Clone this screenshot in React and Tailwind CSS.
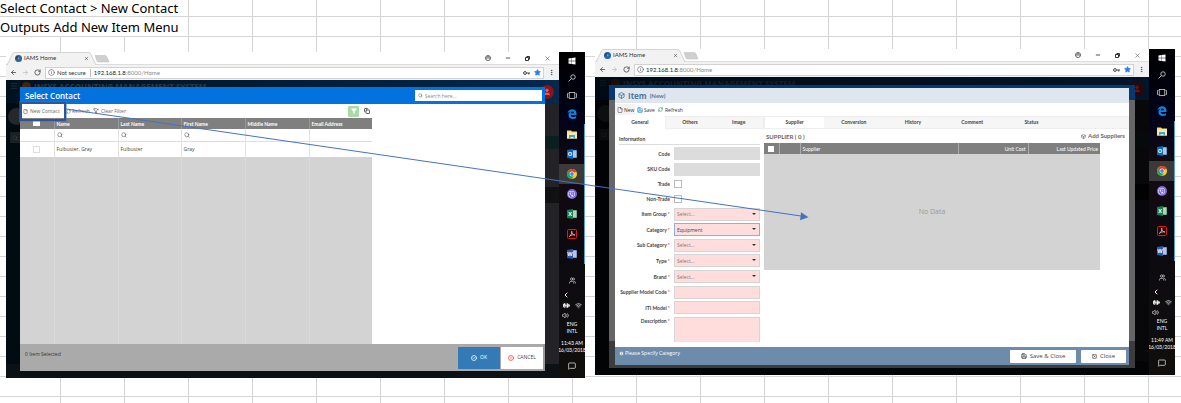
import React from "react";
import {
  ArrowLeft, ArrowRight, RotateCw, Info, User, Minus, X, Star, MoreVertical,
  Search, Wifi, ChevronLeft, MessageSquare, Volume2, BatteryCharging, Users,
  File, FunnelX, Funnel, Copy, Save, RefreshCw, Box, CircleCheck, CircleAlert, SquareX, Menu,
} from "lucide-react";
import { FaWindows, FaViber } from "react-icons/fa";

function Globe() {
  return (
    <svg viewBox="0 0 14 14" className="size-[7px] shrink-0">
      <circle cx="7" cy="7" r="7" fill="#1668c1" />
      <path d="M2 3 L6 1 L7 5 L4 8 L1 7Z" fill="#3c4652" />
      <path d="M6 4 L9 6 L8 9 L6 8Z" fill="#e08a34" />
    </svg>
  );
}

function KeyIcon() {
  return (
    <svg viewBox="0 0 14 8" className="ml-auto h-[4px] w-[7px] shrink-0" fill="none" stroke="#444" strokeWidth="2">
      <circle cx="4" cy="4" r="2.800" /><path d="M7 4 H14 M11.500 4 V7" />
    </svg>
  );
}

function EdgeLogo() {
  return (
    <svg viewBox="0 0 20 20" className="size-[10px]">
      <path d="M1 9 C2 3 6 .5 10.500 .5 C16 .5 19 4.500 19 9.500 V12 H7.500 C7.700 15 10 16.200 12.500 16.200 C14.500 16.200 16.500 15.500 18 14.600 V18.400 C16 19.500 13.800 20 11.500 20 C6.500 20 3 17 3 12.500 C3 9 5 6.500 8 5.200 C5 5.500 2.500 7 1 9 Z M7.600 8.600 H14 C14 6.300 13 4.800 10.900 4.800 C9 4.800 7.900 6.500 7.600 8.600Z" fill="#0c84e4" fillRule="evenodd" />
    </svg>
  );
}

function BrowserChrome({ insecure }) {
  return (
    <header className="bg-white text-[#555]">
      <div className="flex h-[13px] items-center border-b border-[#ddd]">
        <div className="relative flex h-[13px] w-[106px] items-center">
          <svg viewBox="0 0 106 13" className="absolute inset-0 h-[13px] w-[106px]">
            <path d="M1 13 L7 1 Q7.500 .5 8.500 .5 L82 .5 Q84 .5 84.500 1.500 L90 13" fill="#f2f2f2" stroke="#c4c4c4" strokeWidth=".7" />
            <path d="M89 3.500 H99 Q100.500 3.500 101 5 L103 10 H92.500 Q91.500 10 91 9Z" fill="#cfcfcf" stroke="#bbb" strokeWidth=".5" />
          </svg>
          <div className="relative flex w-[83px] items-center gap-[2px] pl-[9px]">
            <Globe />
            <span className="flex-1 font-['Lato',sans-serif] text-[6px] leading-[8px] text-[#333]">IAMS Home</span>
            <X className="size-[5px]" strokeWidth={3} />
          </div>
        </div>
        <div className="flex flex-1 items-center justify-end gap-[14px] pr-[8px]">
          <svg viewBox="0 0 12 12" className="size-[6px]" fill="none" stroke="#555" strokeWidth="1.800">
            <circle cx="6" cy="6" r="5" /><path d="M1 6 H11 M4 3.500 H8" />
          </svg>
          <Minus className="size-[6px]" strokeWidth={4} />
          <svg viewBox="0 0 10 10" className="size-[5px]" fill="none" stroke="#333" strokeWidth="2">
            <path d="M1 3 H7 V9 H1Z M3 1 H9 V7" />
          </svg>
          <X className="size-[7px]" strokeWidth={2} />
        </div>
      </div>
      <div className="flex h-[15px] items-center bg-[#f2f2f2] pl-[4px]">
        <ArrowLeft className="size-[7px]" strokeWidth={3} />
        <ArrowRight className="ml-[5px] size-[7px] text-[#c4c4c4]" strokeWidth={3} />
        <RotateCw className="ml-[5px] size-[7px]" strokeWidth={3} />
        <div className="ml-[4px] flex h-[12px] flex-1 items-center border border-[#d2d2d2] bg-white pl-[2px] pr-[2px] font-['Lato',sans-serif] text-[6px] leading-[8px]">
          <Info className="size-[7px]" strokeWidth={2} />
          {insecure && <span className="ml-[2px] border-r border-[#bbb] pr-[4px] text-[#333]">Not secure</span>}
          <span className={(insecure ? "ml-[3px]" : "ml-[2px]") + " text-[#222]"}>192.168.1.8</span>
          <span className="text-[#888]">:8000/Home</span>
          <KeyIcon />
          <Star className="ml-[4px] size-[7px] fill-[#2f7bf0] text-[#2f7bf0]" />
        </div>
        <MoreVertical className="mx-[4px] size-[7px]" strokeWidth={3} />
      </div>
    </header>
  );
}

function OfficeIcon({ letter, color, dark }) {
  return (
    <svg viewBox="0 0 20 20" className="h-[10px] w-[10px]">
      <rect x="9" y="2.500" width="10.500" height="15" fill="#fff" stroke={color} strokeWidth="1" />
      <path d="M11 6 H18 M11 10 H18 M11 14 H18" stroke={color} strokeWidth="1.600" />
      <path d="M0 2 L12 0 V20 L0 18Z" fill={dark} />
      <text x="6" y="14" textAnchor="middle" fontSize="11" fontWeight="700" fill="#fff" fontFamily="Open Sans, sans-serif">{letter}</text>
    </svg>
  );
}

function Folder() {
  return (
    <svg viewBox="0 0 20 18" className="h-[9px] w-[10px]">
      <path d="M0 1 H8 L10 3 H20 V17 H0Z" fill="#f7d774" />
      <path d="M0 5 H20 V17 H0Z" fill="#fce9a4" />
      <path d="M4 10 H16 V17 H13 V14 H7 V17 H4Z" fill="#37a5e0" />
    </svg>
  );
}

function ChromeLogo() {
  return (
    <svg viewBox="0 0 20 20" className="size-[10px]">
      <circle cx="10" cy="10" r="10" fill="#f9cd1b" />
      <path d="M10 10 L1.340 5 A10 10 0 0 1 18.660 5 Z" fill="#e33b2e" />
      <path d="M10 10 L1.340 5 A10 10 0 0 0 10 20 L14 12 Z" fill="#21a454" />
      <path d="M10 5 H18.660 A10 10 0 0 0 10 0Z" fill="#e33b2e" />
      <circle cx="10" cy="10" r="4.800" fill="#fff" />
      <circle cx="10" cy="10" r="3.800" fill="#4285f4" />
    </svg>
  );
}

function Acrobat() {
  return (
    <svg viewBox="0 0 20 20" className="size-[10px]">
      <rect x="1" y="1" width="18" height="18" rx="2" fill="#2a0606" stroke="#d3201f" strokeWidth="2" />
      <path d="M4.500 15 C8 13 10 8 9.500 4.500 C9 8 12 12 16 12 C12 11 8 12 4.500 15Z" fill="none" stroke="#f2dede" strokeWidth="1.400" />
    </svg>
  );
}

function TaskItem({ children, open, active }) {
  return (
    <li className={"flex h-[20px] items-center justify-center border-r " + (open ? "border-[#5b9bd5] " : "border-transparent ") + (active ? "bg-[#3a3a3a]" : "")}>
      {children}
    </li>
  );
}

function Taskbar({ time }) {
  return (
    <aside className="flex w-[26px] shrink-0 flex-col overflow-hidden bg-[linear-gradient(180deg,#000_0%,#02031a_22%,#140b10_35%,#0c0a10_60%,#100f0d_100%)] text-white">
      <ul>
        <li className="flex h-[17px] items-center justify-center"><FaWindows className="size-[8px]" /></li>
        <li className="flex h-[17px] items-center justify-center">
          <svg viewBox="0 0 16 16" className="size-[8px]" fill="none" stroke="#ddd" strokeWidth="1.600"><circle cx="10" cy="6" r="4.500" /><path d="M7 9 L1 15" /></svg>
        </li>
        <li className="flex h-[18px] items-center justify-center">
          <svg viewBox="0 0 20 14" className="h-[7px] w-[10px]" fill="none" stroke="#ccc" strokeWidth="1.600"><rect x="4.500" y="1" width="11" height="12" /><path d="M3 3 H1 V11 H3 M17 3 H19 V11 H17" /></svg>
        </li>
        <TaskItem><EdgeLogo /></TaskItem>
        <TaskItem open><Folder /></TaskItem>
        <TaskItem open><OfficeIcon letter="O" color="#1c78c8" dark="#0f66b5" /></TaskItem>
        <TaskItem open active><ChromeLogo /></TaskItem>
        <TaskItem open><span className="flex size-[10px] items-center justify-center rounded-full bg-[#7d68d8]"><FaViber className="size-[7px]" /></span></TaskItem>
        <TaskItem open><OfficeIcon letter="X" color="#2b9460" dark="#1c7d49" /></TaskItem>
        <TaskItem open><Acrobat /></TaskItem>
        <TaskItem open><OfficeIcon letter="W" color="#3e72c4" dark="#2a5aa9" /></TaskItem>
      </ul>
      <div className="mt-auto flex flex-col items-center pb-[8px] font-['Lato',sans-serif] text-[5px] leading-[7px] text-white">
        <Users className="size-[7px]" />
        <ChevronLeft className="mr-[13px] mt-[7px] size-[8px]" strokeWidth={3} />
        <div className="mt-[3px] flex gap-[5px]">
          <BatteryCharging className="size-[7px] fill-white" strokeWidth={3} />
          <Wifi className="size-[7px]" />
        </div>
        <Volume2 className="mr-[13px] mt-[3px] size-[7px]" />
        <span className="mt-[2px]">ENG</span>
        <span>INTL</span>
        <span className="mt-[5px] whitespace-nowrap">{time}</span>
        <span className="whitespace-nowrap">16/03/2018</span>
        <MessageSquare className="mt-[8px] size-[8px]" />
      </div>
    </aside>
  );
}

function Backdrop({ dim }) {
  return (
    <div aria-hidden="true" className={"absolute inset-0 overflow-hidden " + (dim ? "bg-[#08080a]" : "bg-[#232327]")}>
      <div className={"absolute inset-y-0 left-0 w-[40px] " + (dim ? "bg-[#010304]" : "bg-[#000b12]")} />
      <div className={"absolute inset-x-0 bottom-0 h-[14px] " + (dim ? "bg-[#030406]" : "bg-[#0c1116]")} />
      <div className={"absolute inset-x-0 top-0 flex h-[23px] items-start gap-[3px] pl-[4px] pt-[2px] " + (dim ? "bg-[linear-gradient(90deg,#010a14,#03152a)] text-[#13202c]" : "bg-[linear-gradient(90deg,#01121f,#04284e)] text-[#283b4c]")}>
        <Menu className="size-[8px]" />
        <span className={"ml-[1px] size-[9px] rounded-full " + (dim ? "bg-[#1e0e08]" : "bg-[#46230f]")} />
        <span className="whitespace-nowrap text-[8px] font-bold leading-[9px]">INSYS ACCOUNTING MANAGEMENT SYSTEM</span>
      </div>
      <div className={"absolute right-[5px] top-[5px] flex size-[14px] items-center justify-center rounded-full " + (dim ? "bg-[#2c0609] text-[#5a1a1f]" : "bg-[#8b1219] text-[#e05b60]")}>
        <User className="size-[8px] fill-current" />
      </div>
      <div className={"absolute left-[2px] top-[28px] size-[17px] rounded-full " + (dim ? "bg-[#0d0e0f]" : "bg-[#25282b]")} />
      <div className={"absolute left-[4px] top-[52px] flex h-[11px] w-[14px] items-center pl-[2px] " + (dim ? "bg-[#0b0c0d] text-[#222]" : "bg-[#1a2024] text-[#444]")}>
        <Search className="size-[6px]" />
      </div>
      <div className={"absolute right-0 top-[56px] h-[13px] w-[14px] " + (dim ? "bg-[#050a0a]" : "bg-[#0c1f20]")} />
      <div className={"absolute right-0 top-[107px] h-[16px] w-[14px] " + (dim ? "bg-[#020203]" : "bg-[#111113]")} />
    </div>
  );
}

function Window({ insecure, time, dim, className, children }) {
  return (
    <section className={"flex min-w-0 " + className}>
      <div className="flex min-w-0 flex-1 flex-col">
        <BrowserChrome insecure={insecure} />
        <div className="relative flex-1">
          <Backdrop dim={dim} />
          {children}
        </div>
      </div>
      <Taskbar time={time} />
    </section>
  );
}

const contactCols = (
  <colgroup>
    <col className="w-[34px]" /><col className="w-[64px]" /><col className="w-[63px]" />
    <col className="w-[64px]" /><col className="w-[64px]" /><col className="w-[63px]" />
  </colgroup>
);

function ContactDialog() {
  return (
    <div className="relative px-[14px] pb-[7px] pt-[7px]">
      <div className="flex flex-col bg-white">
        <div className="flex h-[17px] items-center justify-between bg-[#0273de] pl-[5px] pr-[3px]">
          <h2 className="text-[8px] font-semibold leading-[10px] text-white">Select Contact</h2>
          <label className="flex h-[11px] w-[127px] items-center gap-[2px] bg-white pl-[3px] text-[#777]">
            <Search className="size-[5px]" strokeWidth={3} />
            <input aria-label="Search" placeholder="Search here..." className="w-full min-w-0 text-[5px] leading-[8px] outline-none placeholder:text-[#888]" />
          </label>
        </div>
        <div className="relative flex h-[14px] w-[352px] items-center text-[5px] leading-[8px] text-[#666]">
          <button className="flex w-[46px] items-center gap-[2px] whitespace-nowrap pl-[3px]"><File className="size-[5px]" strokeWidth={3} />New Contact</button>
          <button className="flex items-center gap-[1px]"><RefreshCw className="size-[5px] text-[#5aa468]" strokeWidth={3} />Refresh</button>
          <button className="ml-[3px] flex items-center gap-[2px]"><FunnelX className="size-[6px]" strokeWidth={3} />Clear Filter</button>
          <button aria-label="Filter" className="ml-auto flex size-[11px] items-center justify-center rounded-[1px] bg-[#a9dba9] text-white"><Funnel className="size-[6px] fill-white" /></button>
          <button aria-label="Columns" className="ml-[2px] flex size-[11px] items-center justify-center text-[#333]"><Copy className="size-[6px]" strokeWidth={3} /></button>
          <span className="absolute left-0 top-[-2px] z-10 h-[19px] w-[46px] border-2 border-[#2f5597] outline outline-[#4472c4]/50" />
        </div>
        <div className="h-[226px] w-[352px] bg-[#d3d3d3]">
          <table className="h-full w-full table-fixed border-collapse text-left text-[5px] leading-[8px] text-[#444]">
            {contactCols}
            <thead>
              <tr className="h-[11px] bg-[#7f7f7f] text-white">
                <th className="border-r border-[#999]"><input type="checkbox" aria-label="Select all contacts" className="mx-auto block h-[5px] w-[7px] appearance-none bg-white" /></th>
                {["Name", "Last Name", "First Name", "Middle Name", "Email Address"].map((t) => (
                  <th key={t} className="whitespace-nowrap border-r border-[#999] px-[2px] py-0 font-['Lato',sans-serif] font-bold last:border-0">{t}</th>
                ))}
              </tr>
            </thead>
            <tbody>
              <tr className="h-[12px] border-b border-[#ddd] bg-white">
                <td className="border-r border-[#e2e2e2]" />
                {[1, 1, 1, 0, 0].map((s, i) => (
                  <td key={i} className="border-r border-[#e2e2e2] px-[2px] py-0 last:border-0">{s ? <Search className="size-[6px]" strokeWidth={2} /> : null}</td>
                ))}
              </tr>
              <tr className="h-[16px] bg-white">
                <td className="border-r border-[#e2e2e2]"><input type="checkbox" aria-label="Select Fulbuster, Gray" className="mx-auto block size-[7px] appearance-none border border-[#ddd] bg-white" /></td>
                {["Fulbuster, Gray", "Fulbuster", "Gray", "", ""].map((t, i) => (
                  <td key={i} className="whitespace-nowrap border-r border-[#e2e2e2] px-[2px] py-0 last:border-0">{t}</td>
                ))}
              </tr>
              <tr>
                {[0, 1, 2, 3, 4, 5].map((i) => <td key={i} className="border-r border-[#dadada] last:border-0" />)}
              </tr>
            </tbody>
          </table>
        </div>
        <footer className="flex h-[27px] items-center border-r-2 border-[#999] bg-[#aaa] pl-[5px] text-[5px] leading-[7px]">
          <span className="mb-[6px] flex-1 text-[#333]">0 Item Selected</span>
          <button className="flex h-[22px] w-[42px] items-center justify-center gap-[3px] bg-[#337ab7] text-white"><CircleCheck className="size-[6px]" strokeWidth={3} />OK</button>
          <button className="ml-[1px] flex h-[22px] w-[42px] items-center justify-center gap-[3px] bg-white text-[#444]"><CircleAlert className="size-[6px] text-[#f04a3e]" strokeWidth={3} />CANCEL</button>
        </footer>
      </div>
    </div>
  );
}

function Field({ id, label, required, kind, value }) {
  const box = "block h-[13px] w-full appearance-none rounded-none border bg-[#fdd] px-[2px] py-0 text-[5px] leading-[8px] outline-none";
  return (
    <div className={"flex " + (kind === "area" ? "h-[25px] items-start" : kind === "check" ? "h-[12px] items-center" : "h-[13px] items-center")}>
      <label htmlFor={id} className="w-[55px] shrink-0 whitespace-nowrap text-right font-['Lato',sans-serif] text-[5px] font-bold leading-[8px] text-[#444]">
        {label}{required && <span className="text-[#f05050]"> *</span>}
      </label>
      <div className="relative ml-[4px] flex-1">
        {kind === "gray" && <input id={id} className="block h-[13px] w-full bg-[#dcdcdc] px-[2px] text-[5px] outline-none" />}
        {kind === "check" && <input id={id} type="checkbox" className="block size-[8px] appearance-none border border-[#bbb] bg-white" />}
        {kind === "text" && <input id={id} className={box + " border-[#d5d5d5]"} />}
        {kind === "area" && <textarea id={id} className="block h-[25px] w-full resize-none border border-b-0 border-[#d5d5d5] bg-[#fdd] px-[2px] text-[5px] outline-none" />}
        {kind === "select" && (
          <>
            <select id={id} className={box + (value ? " border-[#8fb0d8] text-[#444]" : " border-[#d5d5d5] text-[#777]")}>
              <option>{value || "Select..."}</option>
            </select>
            <svg viewBox="0 0 6 3" className="pointer-events-none absolute right-[4px] top-[5px] h-[2px] w-[4px]"><path d="M0 0 H6 L3 3Z" fill="#333" /></svg>
          </>
        )}
      </div>
    </div>
  );
}

const fields = [
  ["code", "Code", false, "gray"],
  ["sku", "SKU Code", false, "gray"],
  ["trade", "Trade", false, "check"],
  ["nontrade", "Non-Trade", false, "check"],
  ["group", "Item Group", true, "select"],
  ["category", "Category", true, "select", "Equipment"],
  ["subcategory", "Sub Category", true, "select"],
  ["type", "Type", true, "select"],
  ["brand", "Brand", true, "select"],
  ["suppliermodel", "Supplier Model Code", true, "text"],
  ["itimodel", "ITI Model", true, "text"],
  ["description", "Description", true, "area"],
];

function ItemDialog() {
  const tab = "flex items-center justify-center font-['Lato',sans-serif] text-[5px] font-bold leading-[7px] text-[#444]";
  return (
    <div className="relative px-[14px] pb-[7px] pt-[8px]">
      <div className="bg-[linear-gradient(180deg,#053a70_0,#053a70_15px,#666_15px,#666_256px,#3c3c3c_256px)] px-[6px] py-[3px]">
        <div className="flex h-[277px] flex-col bg-white">
          <div className="flex h-[15px] items-center gap-[3px] bg-[#e0e6ee] pl-[3px] text-[#52789f]">
            <Box className="size-[7px]" strokeWidth={3} />
            <h2 className="text-[8px] font-bold leading-[10px]">Item</h2>
            <span className="font-['Lato',sans-serif] text-[6px] font-bold leading-[8px]">(New)</span>
          </div>
          <div className="flex h-[13px] items-center text-[5px] leading-[8px] text-[#333]">
            <button className="flex h-[11px] w-[20px] items-center gap-[1px] bg-[#f3f3f3] pl-[2px]"><File className="size-[6px]" strokeWidth={2} />New</button>
            <button className="ml-[2px] flex w-[18px] items-center gap-[1px]"><Save className="size-[6px] text-[#2f8fd0]" strokeWidth={3} />Save</button>
            <button className="ml-[3px] flex items-center gap-[2px]"><RefreshCw className="size-[5px] text-[#4a9a8a]" strokeWidth={3} />Refresh</button>
          </div>
          <div className="flex flex-1">
            <div className="flex w-[149px] shrink-0 flex-col">
              <nav className="grid h-[13px] shrink-0 grid-cols-3">
                <button className={tab}>General</button>
                <button className={tab + " border border-r-0 border-[#eee] bg-[#f6f6f6]"}>Others</button>
                <button className={tab + " border border-l-0 border-[#eee] bg-[#f6f6f6]"}>Image</button>
              </nav>
              <h3 className="ml-[4px] mr-[4px] mt-[6px] border-b border-[#ddd] pb-[1px] font-['Lato',sans-serif] text-[5px] font-bold leading-[8px] text-[#444]">Information</h3>
              <div className="mr-[4px] mt-[2px] flex flex-1 flex-col justify-between pb-[5px]">
                {fields.map(([id, label, required, kind, value]) => (
                  <Field key={id} id={id} label={label} required={required} kind={kind} value={value} />
                ))}
              </div>
            </div>
            <div className="min-w-0 flex-1">
              <nav className="grid h-[13px] grid-cols-[1fr_1fr_1fr_1fr_1fr_68px] border border-r-0 border-[#eee] bg-[#f6f6f6]">
                {["Supplier", "Conversion", "History", "Comment", "Status"].map((t, i) => (
                  <button key={t} className={tab + (i === 0 ? " bg-white" : "")}>{t}</button>
                ))}
              </nav>
              <div className="flex h-[14px] items-center justify-between pl-[2px] pr-[4px] font-['Lato',sans-serif] text-[6px] font-bold leading-[8px] text-[#666]">
                <h3 className="pt-[2px]">SUPPLIER ( 0 )</h3>
                <button className="flex items-center gap-[2px]"><Box className="size-[5px]" strokeWidth={3} />Add Suppliers</button>
              </div>
              <div className="mr-[29px]">
                <table className="w-full table-fixed border-collapse text-[5px] leading-[8px]">
                  <colgroup><col className="w-[15px]" /><col className="w-[21px]" /><col /><col className="w-[70px]" /><col className="w-[72px]" /></colgroup>
                  <thead className="font-['Lato',sans-serif]">
                    <tr className="h-[11px] bg-[#7f7f7f] text-white">
                      <th className="border-r border-[#aaa] p-0"><input type="checkbox" aria-label="Select all suppliers" className="mx-auto block size-[6px] appearance-none bg-white" /></th>
                      <th className="border-r border-[#aaa] p-0" />
                      <th className="border-r border-[#aaa] px-[2px] py-0 text-left font-normal">Supplier</th>
                      <th className="border-r border-[#aaa] px-[2px] py-0 text-right font-normal">Unit Cost</th>
                      <th className="px-[2px] py-0 text-right font-normal">Last Updated Price</th>
                    </tr>
                  </thead>
                  <tbody>
                    <tr className="h-[116px] bg-[#d3d3d3]"><td colSpan={5} className="p-0 text-center text-[7px] text-[#999]">No Data</td></tr>
                  </tbody>
                </table>
              </div>
            </div>
          </div>
          <footer className="flex h-[18px] items-center gap-[5px] bg-[#6d8bab] pl-[4px] pr-[3px] text-[5px] leading-[8px] text-white">
            <span className="mb-[6px] flex flex-1 items-center gap-[1px]"><Info className="size-[5px] fill-white text-[#6d8bab]" strokeWidth={3} /><span>Please Specify Category</span></span>
            <button className="flex h-[13px] w-[66px] items-center justify-center gap-[3px] rounded-[1px] bg-white text-[6px] text-[#444]"><Save className="size-[6px]" strokeWidth={3} />Save &amp; Close</button>
            <button className="flex h-[13px] w-[45px] items-center justify-center gap-[3px] rounded-[1px] bg-white text-[6px] text-[#444]"><SquareX className="size-[5px]" strokeWidth={3} />Close</button>
          </footer>
        </div>
      </div>
    </div>
  );
}

export default function App() {
  return (
    <main className="relative min-h-screen overflow-hidden bg-white bg-[linear-gradient(90deg,#d4d4d4_1px,transparent_1px),linear-gradient(180deg,#d4d4d4_1px,transparent_1px)] bg-[length:64px_20px] bg-[position:60px_16px] font-['Open_Sans','Noto_Sans',sans-serif]">
      <div className="flex h-[36px] w-[188px] flex-col gap-px whitespace-nowrap font-['Noto_Sans',sans-serif] text-[13px] leading-[16px] text-black">
        <p className="h-[16px] bg-white">Select Contact &gt; New Contact</p>
        <p className="h-[19px] bg-white pt-[2px]">Outputs Add New Item Menu</p>
      </div>
      <div className="grid grid-cols-[579fr_580fr] items-start gap-[10px] pl-[6px] pr-[6px]">
        <Window insecure time="11:43 AM" className="mt-[16px]"><ContactDialog /></Window>
        <Window dim time="11:49 AM" className="mt-[13px]"><ItemDialog /></Window>
      </div>
      <svg aria-hidden="true" className="pointer-events-none absolute inset-0 h-full w-full">
        <path d="M66 109 L801 216" stroke="#4472c4" strokeWidth="1" fill="none" />
        <path d="M808.500 217.300 L800 220.200 L801 212.300Z" fill="#4472c4" />
      </svg>
    </main>
  );
}
